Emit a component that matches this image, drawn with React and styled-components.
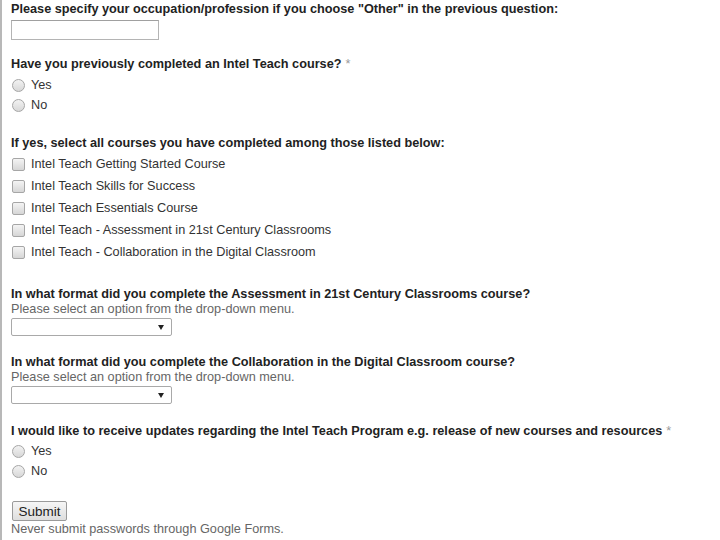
import React from 'react'
import styled, { createGlobalStyle } from 'styled-components'

const GlobalStyle = createGlobalStyle`
  html, body {
    margin: 0;
    padding: 0;
    background: #ffffff;
  }
  body {
    font-family: "Liberation Sans", Arial, sans-serif;
    font-size: 12.7px;
    color: #222;
  }
`;

const Page = styled.div`
  width: 720px;
  height: 540px;
  box-sizing: border-box;
  border-left: 2px solid #b8b8b8;
  padding: 1px 0 0 9px;
  overflow: hidden;
`;

const Item = styled.div`
  margin-bottom: ${p => p.$gap || 16}px;
`;

const Question = styled.div`
  font-weight: bold;
  line-height: ${p => p.$lh || 16}px;
  color: #222;
  white-space: nowrap;
`;

const Required = styled.span`
  font-weight: normal;
  color: #999;
  margin-left: 4px;
`;

const Help = styled.div`
  color: #666;
  line-height: 14px;
`;

const TextInput = styled.input`
  display: block;
  box-sizing: border-box;
  width: 148px;
  height: 20px;
  margin: 2px 0 0 0;
  border: 1px solid #b4b4b4;
  border-top-color: #a0a0a0;
  background: #fff;
  padding: 0 3px;
  font: inherit;
`;

const OptionRow = styled.label`
  display: flex;
  align-items: center;
  height: ${p => p.$h || 20}px;
  line-height: ${p => p.$h || 20}px;
  color: #333;
`;

const Radio = styled.span`
  width: 11px;
  height: 11px;
  margin: 0 6px 0 1px;
  border-radius: 50%;
  border: 1px solid #a6a6a6;
  background: linear-gradient(#f2f2f2, #d8d8d8);
  flex: none;
`;

const Checkbox = styled.span`
  width: 11px;
  height: 11px;
  margin: 0 6px 0 1px;
  border-radius: 2px;
  border: 1px solid #a6a6a6;
  background: linear-gradient(#f4f4f4, #d6d6d6);
  flex: none;
`;

const Options = styled.div`
  margin-top: ${p => p.$top || 0}px;
`;

const Select = styled.div`
  position: relative;
  box-sizing: border-box;
  width: 161px;
  height: 18px;
  margin-top: 2px;
  border: 1px solid #a9a9a9;
  border-radius: 2px;
  background: #fff;

  &::after {
    content: '';
    position: absolute;
    right: 7px;
    top: 6px;
    border-left: 3px solid transparent;
    border-right: 3px solid transparent;
    border-top: 5px solid #222;
  }
`;

const SubmitButton = styled.button`
  display: block;
  box-sizing: border-box;
  width: 55px;
  height: 20px;
  margin: 0 0 0 1px;
  padding: 0;
  border: 1px solid #9a9a9a;
  border-radius: 2px;
  background: linear-gradient(#f6f6f6, #dedede);
  font-family: "Liberation Sans", Arial, sans-serif;
  font-size: 13.5px;
  color: #222;
`;

const Note = styled.div`
  color: #666;
  line-height: 15px;
  margin-top: 1px;
`;

const courses = [
  'Intel Teach Getting Started Course',
  'Intel Teach Skills for Success',
  'Intel Teach Essentials Course',
  'Intel Teach - Assessment in 21st Century Classrooms',
  'Intel Teach - Collaboration in the Digital Classroom',
];

const RadioGroup = ({ top }) => (
  <Options $top={top}>
    <OptionRow><Radio />Yes</OptionRow>
    <OptionRow><Radio />No</OptionRow>
  </Options>
);

export default function App() {
  return (
    <Page>
      <GlobalStyle />
      <Item $gap={16}>
        <Question $lh={17}>Please specify your occupation/profession if you choose "Other" in the previous question:</Question>
        <TextInput type="text" />
      </Item>

      <Item $gap={20}>
        <Question $lh={17}>Have you previously completed an Intel Teach course?<Required>*</Required></Question>
        <RadioGroup top={2} />
      </Item>

      <Item $gap={23}>
        <Question $lh={17}>If yes, select all courses you have completed among those listed below:</Question>
        <Options $top={1}>
          {courses.map(c => (
            <OptionRow key={c} $h={22}><Checkbox />{c}</OptionRow>
          ))}
        </Options>
      </Item>

      <Item $gap={18}>
        <Question>In what format did you complete the Assessment in 21st Century Classrooms course?</Question>
        <Help>Please select an option from the drop-down menu.</Help>
        <Select />
      </Item>

      <Item $gap={19}>
        <Question>In what format did you complete the Collaboration in the Digital Classroom course?</Question>
        <Help>Please select an option from the drop-down menu.</Help>
        <Select />
      </Item>

      <Item $gap={20}>
        <Question>I would like to receive updates regarding the Intel Teach Program e.g. release of new courses and resources<Required>*</Required></Question>
        <RadioGroup top={2} />
      </Item>

      <SubmitButton type="button">Submit</SubmitButton>
      <Note>Never submit passwords through Google Forms.</Note>
    </Page>
  )
}
